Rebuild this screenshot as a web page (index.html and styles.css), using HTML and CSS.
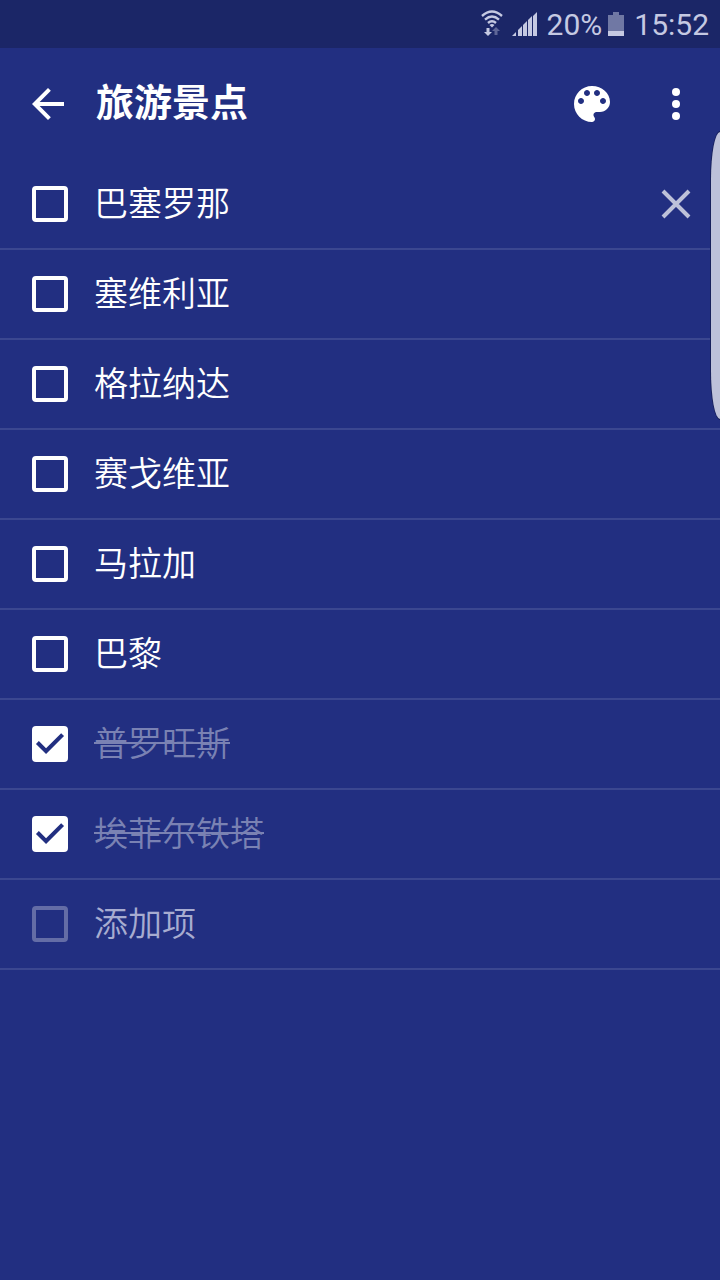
FILE: index.html
```html
<!DOCTYPE html>
<html lang="zh-CN">
<head>
  <meta charset="UTF-8" />
  <meta name="viewport" content="width=device-width, initial-scale=1.0"/>
  <title>旅游景点</title>
  <link rel="stylesheet" href="styles.css">
</head>
<body>

  <div class="status-bar">
    <svg class="wifi" width="24" height="28" viewBox="0 0 24 28">
      <g fill="none" stroke="currentColor" stroke-width="2.4">
        <path d="M2 6Q12-3 22 6" />
        <path d="M5 9.700Q12 3.500 19 9.700" />
        <path d="M8 13Q12 9.500 16 13" />
      </g>
      <path d="M9.500 15Q12 13 14.500 15L12 17.500z" fill="currentColor" />
      <path d="M6.500 18h3v4H12l-4 4-4-4h2.500z" fill="currentColor" />
      <path d="M14.500 25h3v-4H20l-4-4-4 4h2.500z" fill="currentColor" opacity="0.4" />
    </svg>
    <svg class="signal" width="26" height="26" viewBox="0 0 26 26" fill="currentColor">
      <path d="M0 25l4-4v4zM6 19l4-4v10H6zM11 14l4-4v15h-4zM16 9l4-4v20h-4zM21 5l4-4v24h-4z" />
    </svg>
    <span class="percent">20%</span>
    <svg class="battery" width="16" height="24" viewBox="0 0 16 24" fill="currentColor">
      <path d="M5 0h6v3h5v16H0V3h5z" opacity="0.5" />
      <path d="M0 19h16v5H0z" />
    </svg>
    <span class="clock">15:52</span>
  </div>

  <header class="toolbar">
    <button class="icon-btn" type="button" aria-label="返回">
      <svg width="48" height="48" viewBox="0 0 24 24" fill="currentColor">
        <path d="M20 11H7.830l5.590-5.590L12 4l-8 8 8 8 1.410-1.410L7.830 13H20v-2z" />
      </svg>
    </button>
    <h1>旅游景点</h1>
    <button class="icon-btn" type="button" aria-label="颜色">
      <svg width="48" height="48" viewBox="0 0 24 24" fill="currentColor">
        <path d="M12 3c-4.970 0-9 4.030-9 9s4.030 9 9 9c.83 0 1.500-.67 1.500-1.500 0-.39-.15-.74-.39-1.010-.23-.26-.38-.61-.38-.99 0-.83.67-1.500 1.500-1.500H16c2.760 0 5-2.240 5-5 0-4.420-4.030-8-9-8zm-5.500 9c-.83 0-1.500-.67-1.500-1.500S5.670 9 6.500 9 8 9.670 8 10.500 7.330 12 6.500 12zm3-4C8.670 8 8 7.330 8 6.500S8.670 5 9.500 5s1.500.67 1.500 1.500S10.330 8 9.500 8zm5 0c-.83 0-1.500-.67-1.500-1.500S13.670 5 14.500 5s1.500.67 1.500 1.500S15.330 8 14.500 8zm3 4c-.83 0-1.500-.67-1.500-1.500S16.670 9 17.500 9s1.500.67 1.500 1.500-.67 1.500-1.500 1.500z" />
      </svg>
    </button>
    <button class="icon-btn" type="button" aria-label="更多">
      <svg width="48" height="48" viewBox="0 0 24 24" fill="currentColor">
        <circle cx="12" cy="6" r="2" />
        <circle cx="12" cy="12" r="2" />
        <circle cx="12" cy="18" r="2" />
      </svg>
    </button>
  </header>

  <ul class="list">
    <li>
      <input type="checkbox" id="item1">
      <label for="item1">巴塞罗那</label>
      <button class="icon-btn remove" type="button" aria-label="删除">
        <svg width="48" height="48" viewBox="0 0 48 48" fill="none" stroke="currentColor" stroke-width="4">
          <path d="M11 11l26 26M37 11L11 37" />
        </svg>
      </button>
    </li>
    <li>
      <input type="checkbox" id="item2">
      <label for="item2">塞维利亚</label>
    </li>
    <li>
      <input type="checkbox" id="item3">
      <label for="item3">格拉纳达</label>
    </li>
    <li>
      <input type="checkbox" id="item4">
      <label for="item4">赛戈维亚</label>
    </li>
    <li>
      <input type="checkbox" id="item5">
      <label for="item5">马拉加</label>
    </li>
    <li>
      <input type="checkbox" id="item6">
      <label for="item6">巴黎</label>
    </li>
    <li>
      <input type="checkbox" id="item7" checked>
      <label for="item7">普罗旺斯</label>
    </li>
    <li>
      <input type="checkbox" id="item8" checked>
      <label for="item8">埃菲尔铁塔</label>
    </li>
    <li class="add">
      <input type="checkbox" aria-label="新项" disabled>
      <input type="text" placeholder="添加项" aria-label="添加项">
    </li>
  </ul>

  <div class="edge-handle"></div>

</body>
</html>
```
FILE: styles.css
```css
:root {
  --bg: #222f81;
  --status: #1b2667;
  --line: #3b4790;
  --soft: #bdc1d9;
}

* {
  box-sizing: border-box;
  margin: 0;
  padding: 0;
}

body {
  position: relative;
  min-height: 100vh;
  background: var(--bg);
  color: #fff;
  font-family: Roboto, "Noto Sans CJK SC", sans-serif;
}

.status-bar {
  display: flex;
  justify-content: flex-end;
  align-items: center;
  height: 48px;
  padding-right: 11px;
  background: var(--status);
  color: #c5c9e2;
  font-size: 30px;
}

.signal {
  margin: 0 9px 0 8px;
}

.battery {
  margin: 0 10px 0 6px;
}

.toolbar {
  display: flex;
  align-items: center;
  height: 112px;
  padding: 0 20px 0 24px;
}

.toolbar h1 {
  flex: 1;
  padding: 0 0 8px 24px;
  font-family: "Noto Sans CJK SC", sans-serif;
  font-size: 38px;
  font-weight: bold;
  line-height: 56px;
}

.icon-btn {
  display: flex;
  background: none;
  border: none;
  color: #fff;
  cursor: pointer;
}

.toolbar .icon-btn + .icon-btn {
  margin-left: 36px;
}

.list {
  list-style: none;
}

.list li {
  display: flex;
  align-items: center;
  gap: 26px;
  height: 90px;
  padding: 0 20px 0 32px;
  border-bottom: 2px solid var(--line);
}

.list label,
.list input[type="text"] {
  font-family: "Noto Sans CJK SC", sans-serif;
  font-size: 34px;
  font-weight: 350;
  line-height: 50px;
  padding-bottom: 4px;
}

.list input[type="checkbox"] {
  appearance: none;
  width: 36px;
  height: 36px;
  border: 4px solid #fff;
  border-radius: 4px;
}

.list input[type="checkbox"]:checked {
  border: none;
  background: #fff;
}

.list input[type="checkbox"]:checked::before {
  content: "";
  display: block;
  height: 100%;
  background: var(--bg);
  clip-path: polygon(39% 78%, 11% 50%, 19% 42%, 39% 62%, 81% 20%, 89% 28%);
}

.list input:checked + label {
  color: #7a82b3;
  text-decoration: line-through 2px;
}

.list .remove {
  margin-left: auto;
  color: var(--soft);
}

.list .add input[type="checkbox"] {
  border-color: #646da6;
}

.list input[type="text"] {
  flex: 1;
  min-width: 0;
  background: none;
  border: none;
  outline: none;
  color: #fff;
}

.list input[type="text"]::placeholder {
  color: #a7acd0;
}

/* edge panel handle, floats over the list */
.edge-handle {
  position: absolute;
  top: 132px;
  right: 0;
  width: 9px;
  height: 287px;
  background: var(--soft);
  border-radius: 9px 0 0 9px / 48px 0 0 48px;
  box-shadow: 0 0 0 1px #18215c;
}
```
